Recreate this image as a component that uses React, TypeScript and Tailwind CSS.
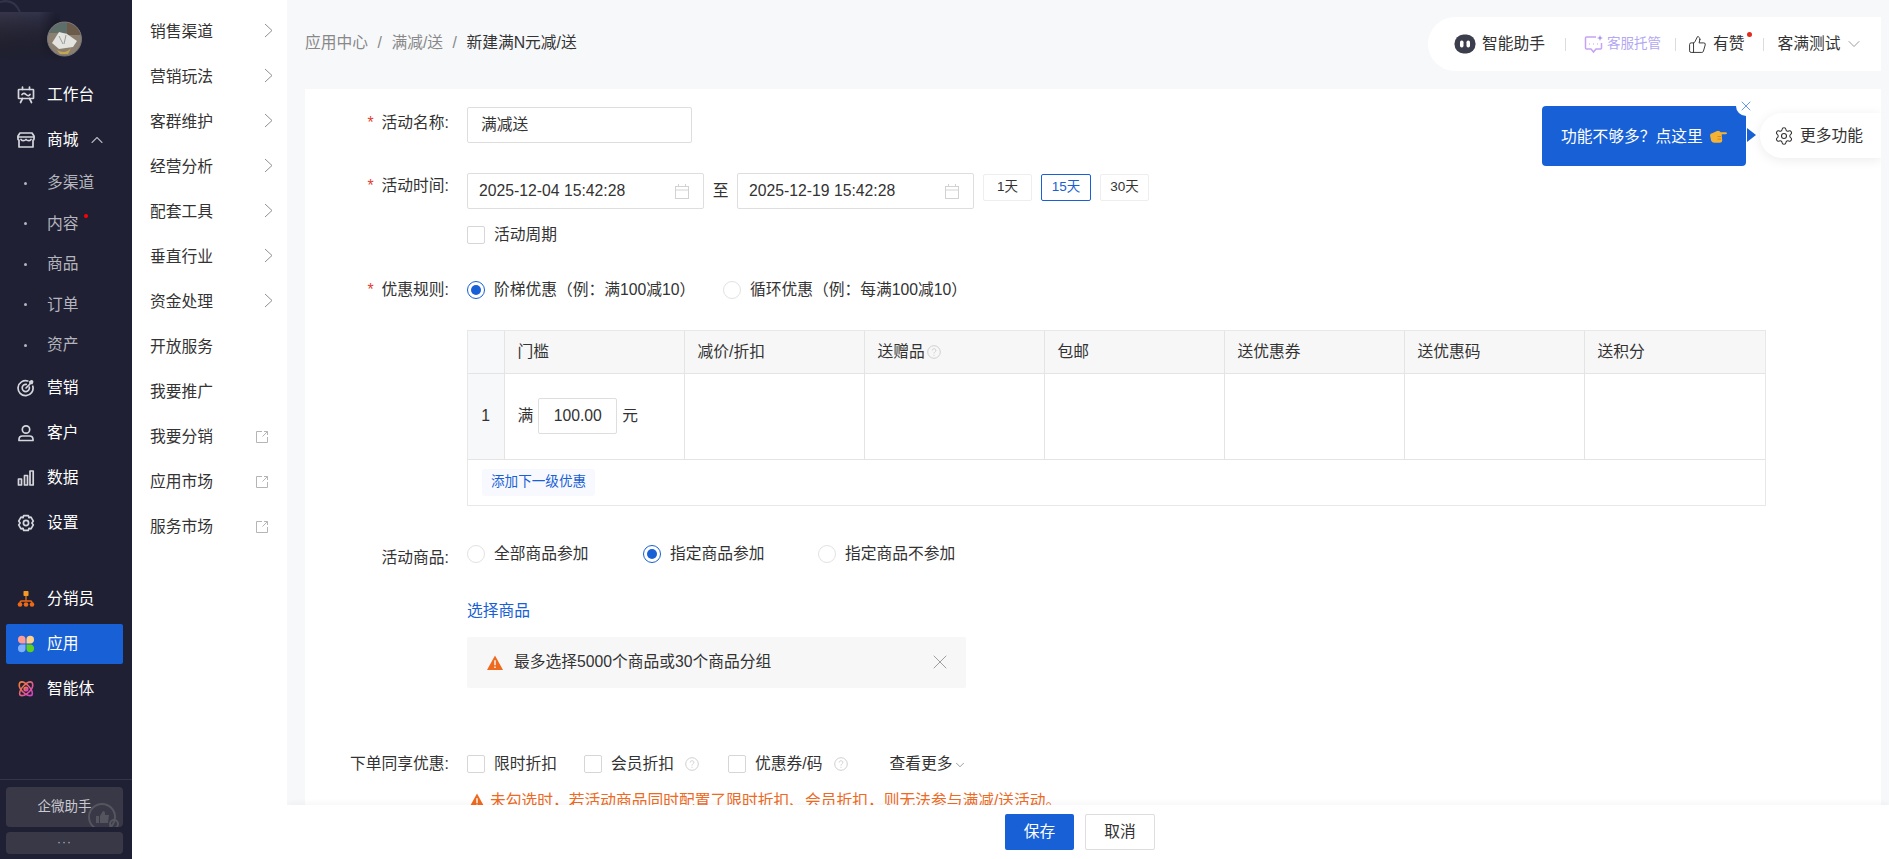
import React from "react";
import { ChevronDown, ChevronUp, Settings, ThumbsUp, X } from "lucide-react";

const Ic = ({ children, size = 18 }: { children: React.ReactNode; size?: number }) => (
  <svg width={size} height={size} viewBox="0 0 18 18" fill="none" stroke="#d6d7dd" strokeWidth="1.700" strokeLinecap="round" strokeLinejoin="round">
    {children}
  </svg>
);

const IWork = () => (
  <Ic>
    <path d="M5.500 1v2.500M12.500 1v2.500" />
    <rect x="1.500" y="3.500" width="15" height="9" rx="0.500" />
    <path d="M5 8.500c1.200-1.600 2.400-1.600 4 0s2.800 1.600 4 0" />
    <path d="M5.500 12.500 3.500 16.500M12.500 12.500l2 4" />
  </Ic>
);
const IStore = () => (
  <Ic>
    <path d="M3 2h12l2 3v3a1 1 0 0 1-1 1v7H2V9a1 1 0 0 1-1-1V5z" />
    <path d="M1 6h16M4 8.500c1.200 1.600 3.600 1.600 5 0 1.400 1.600 3.800 1.600 5 0" />
  </Ic>
);
const ITarget = () => (
  <Ic>
    <path d="M15.800 7.200A7.500 7.500 0 1 1 10.800 2" />
    <path d="M12.300 8.200a3.600 3.600 0 1 1-3-2.800" />
    <path d="M9 9l5-5M13 2.500v2h2" />
    <circle cx="14.600" cy="2.800" r="1" fill="#d6d7dd" />
  </Ic>
);
const IUser = () => (
  <Ic>
    <circle cx="9" cy="5.500" r="3.700" />
    <path d="M2 16.500v-1c0-2 1.500-3.500 3.500-3.500h7c2 0 3.500 1.500 3.500 3.500v1z" />
  </Ic>
);
const IBars = () => (
  <Ic>
    <rect x="1.500" y="10" width="3" height="6" />
    <rect x="7.500" y="6.500" width="3" height="9.500" />
    <rect x="13" y="2" width="3.200" height="14" />
  </Ic>
);
const IGear = () => (
  <Ic>
    <path d="M6.700 1.600h4.600l.7 2 2-.5 2.300 4-1.400 1.900 1.400 1.900-2.300 4-2-.5-.7 2H6.700l-.7-2-2 .5-2.300-4L3.100 9 1.700 7.100l2.300-4 2 .5z" />
    <circle cx="9" cy="9" r="2.600" />
  </Ic>
);
const IDist = () => (
  <svg width="18" height="18" viewBox="0 0 18 18" fill="none">
    <rect x="6.500" y="1" width="5" height="5" rx="0.800" fill="#f59a23" />
    <path d="M9 6v5M3 14v-1.500q0-1.500 1.500-1.500h9q1.500 0 1.500 1.500V14" stroke="#ef6a17" strokeWidth="1.300" />
    <circle cx="3" cy="14.500" r="2.300" fill="#ef6a17" />
    <circle cx="9" cy="14.500" r="2.300" fill="#ef6a17" />
    <circle cx="15" cy="14.500" r="2.300" fill="#ef6a17" />
  </svg>
);
const IApp = () => (
  <svg width="18" height="18" viewBox="0 0 18 18">
    <path d="M1 4.500A3.500 3.500 0 0 1 8.500 4.500V8.500H4.500A3.500 3.500 0 0 1 1 4.500z" fill="#ff9a94" />
    <path d="M9.500 4.500A3.500 3.500 0 0 1 17 4.500 3.500 3.500 0 0 1 13.500 8.500H9.500z" fill="#ffcf8c" />
    <path d="M1 13.500A3.500 3.500 0 0 1 4.500 9.500H8.500V13.500A3.500 3.500 0 0 1 1 13.500z" fill="#7fb0ff" />
    <path d="M9.500 9.500H13.500A3.500 3.500 0 0 1 17 13.500 3.500 3.500 0 0 1 9.500 13.500z" fill="#5fd01f" />
  </svg>
);
const IAgent = () => (
  <svg width="18" height="18" viewBox="0 0 18 18" fill="none" strokeWidth="1.600">
    <defs>
      <linearGradient id="ag" x1="0" y1="0" x2="1" y2="1">
        <stop offset="0" stopColor="#f5822e" />
        <stop offset="1" stopColor="#d63fd0" />
      </linearGradient>
    </defs>
    <g stroke="url(#ag)">
      <path d="M3 2.500c2-1.500 5 0 8 3s5 7 4 9.500c-2 1.500-6 0-9-3S1.500 5 3 2.500z" />
      <path d="M15 2.500c-2-1.500-5 0-8 3s-5 7-4 9.500c2 1.500 6 0 9-3s4.500-7 3-9.500z" />
      <circle cx="9" cy="9" r="1.800" fill="#e5486e" />
    </g>
  </svg>
);
const IExt = () => (
  <svg width="12" height="12" viewBox="0 0 12 12" fill="none" stroke="#b5b5b5" strokeWidth="1">
    <path d="M6 .5H.5v11h11V6M6.500 5.500 11.500.5M8 .5h3.500V4" />
  </svg>
);
const IArrow = () => (
  <svg width="9" height="15" viewBox="0 0 9 15" fill="none" stroke="#8f8f8f" strokeWidth="1">
    <path d="M1 1l7 6.500L1 14" />
  </svg>
);
const ICal = () => (
  <svg width="14" height="15" viewBox="0 0 14 15" fill="none" stroke="#d2d2d2" strokeWidth="1">
    <rect x="0.500" y="2.500" width="13" height="12" />
    <path d="M.5 6h13M3.500 0v3M10.500 0v3" />
  </svg>
);
const IWarn = ({ w = 16 }: { w?: number }) => (
  <svg width={w} height={w - 1} viewBox="0 0 15 14">
    <path d="M7.500.5 15 14H0z" fill="#ee6a1f" />
    <path d="M7.500 5v4.500M7.500 10.800v1.300" stroke="#fff" strokeWidth="1.300" />
  </svg>
);
const IHelp = () => (
  <svg width="14" height="14" viewBox="0 0 14 14" fill="none" stroke="#cfcfcf" strokeWidth="1">
    <circle cx="7" cy="7" r="6.300" />
    <path d="M5.200 5.500c0-2.300 3.700-2.300 3.700 0 0 1.300-1.900 1.500-1.900 3M7 9.800v1" />
  </svg>
);

const NavItem = ({ icon, label, active, children }: { icon: React.ReactNode; label: string; active?: boolean; children?: React.ReactNode }) => (
  <div className="h-[45px] flex items-center">
    <div className={`h-[40px] w-[117px] ml-[6px] mt-[2px] pl-[11px] flex items-center gap-[12px] rounded-[2px] text-white ${active ? "bg-[#1760d6]" : ""}`}>
      <span className="w-[18px] h-[18px] flex">{icon}</span>
      <span>{label}</span>
      {children}
    </div>
  </div>
);

const SubItem = ({ label, dot }: { label: string; dot?: boolean }) => (
  <div className="h-[40.500px] flex items-center pl-[24px] text-[#b4b5bd]">
    <span className="w-[3px] h-[3px] rounded-full bg-[#b4b5bd] mr-[20px]" />
    <span className="relative">
      {label}
      {dot && <span className="absolute right-[-9px] top-[2px] w-[4px] h-[4px] rounded-full bg-[#ff0000]" />}
    </span>
  </div>
);

const Second = ({ label, kind }: { label: string; kind?: "arrow" | "ext" }) => (
  <div className="h-[45px] flex items-center pl-[18px] text-[#333]">
    <span className="w-[107px]">{label}</span>
    {kind === "arrow" && <span className="ml-[7px] mt-[-3px] flex"><IArrow /></span>}
    {kind === "ext" && <span className="ml-[-1px] flex"><IExt /></span>}
  </div>
);

const Label = ({ text, req, offset }: { text: string; req?: boolean; offset: string }) => (
  <div className={`w-[144px] mr-[18px] shrink-0 text-right leading-[22px] text-[#333] ${offset}`}>
    {req && <span className="text-[#e2402f] mr-[8px]">*</span>}
    {text}
  </div>
);

const Box = () => <span className="w-[18px] h-[18px] rounded-[2px] border border-[#d6d6d6] bg-white shrink-0" />;

const Radio = ({ on }: { on?: boolean }) => (
  <span className={`w-[18px] h-[18px] rounded-full border shrink-0 flex items-center justify-center bg-white ${on ? "border-[#1760d6]" : "border-[#e2e2e2]"}`}>
    {on && <span className="w-[10px] h-[10px] rounded-full bg-[#1760d6]" />}
  </span>
);

const DateBox = ({ value }: { value: string }) => (
  <div className="w-[237px] h-[36px] rounded-[2px] border border-[#dedede] flex items-center pl-[11px] pr-[14px] justify-between text-[#333]">
    <span>{value}</span>
    <ICal />
  </div>
);

const DayBtn = ({ t, on, w }: { t: string; on?: boolean; w: string }) => (
  <div className={`${w} h-[27px] rounded-[2px] border flex items-center justify-center text-[13.500px] pb-[1px] ${on ? "border-[#1760d6] text-[#1760d6]" : "border-[#eeeeee] text-[#333]"}`}>{t}</div>
);

const cols = ["减价/折扣", "送赠品", "包邮", "送优惠券", "送优惠码", "送积分"];

export default function App() {
  return (
    <div className="w-[1889px] h-[859px] flex overflow-hidden text-[15.750px] [font-family:'Liberation_Sans','Noto_Sans_CJK_SC',sans-serif]">
      {/* dark nav */}
      <aside className="w-[132px] h-full bg-[#1f2033] flex flex-col shrink-0">
        <div className="h-[71px] relative shrink-0">
          <svg className="absolute left-0 top-0" width="62" height="64" viewBox="0 0 62 64">
            <defs>
              <linearGradient id="bag" x1="0" y1="0" x2="1" y2="0">
                <stop offset="0" stopColor="#37364a" />
                <stop offset="0.700" stopColor="#33334a" />
                <stop offset="1" stopColor="#1f2033" />
              </linearGradient>
              <linearGradient id="bagv" x1="0" y1="0" x2="0" y2="1">
                <stop offset="0" stopColor="#000" stopOpacity="0" />
                <stop offset="1" stopColor="#1f2033" />
              </linearGradient>
            </defs>
            <rect x="0" y="12" width="55" height="50" fill="url(#bag)" />
            <rect x="0" y="12" width="60" height="50" fill="url(#bagv)" />
            <path d="M0 2Q14 -2 20 12" stroke="#32324a" strokeWidth="2" fill="none" />
          </svg>
          <svg className="absolute left-[47px] top-[21px]" width="35" height="36" viewBox="0 0 35 36">
            <clipPath id="av"><circle cx="17.500" cy="18" r="17" /></clipPath>
            <g clipPath="url(#av)">
              <rect width="35" height="36" fill="#8a7f70" />
              <rect width="35" height="12" fill="#5d6f68" />
              <rect x="20" width="15" height="14" fill="#6c5a4a" />
              <path d="M5 22 12 11l8 2 10 7-4 6-14 2z" fill="#e3e3df" />
              <path d="M10 29q8 5 14-2l-3 6H13z" fill="#c2a94f" />
              <path d="M12 15l4 8M19 14l-2 9" stroke="#9a9a98" strokeWidth="1" />
            </g>
            <circle cx="17.500" cy="18" r="17" fill="none" stroke="#77757a" strokeWidth="1" />
          </svg>
        </div>
        <NavItem icon={<IWork />} label="工作台" />
        <NavItem icon={<IStore />} label="商城">
          <ChevronUp size={20} strokeWidth={1.300} color="#b4b5bd" className="ml-[-4px]" />
        </NavItem>
        <div className="pt-[2px] mb-[-1px]">
          <SubItem label="多渠道" />
          <SubItem label="内容" dot />
          <SubItem label="商品" />
          <SubItem label="订单" />
          <SubItem label="资产" />
        </div>
        <NavItem icon={<ITarget />} label="营销" />
        <NavItem icon={<IUser />} label="客户" />
        <NavItem icon={<IBars />} label="数据" />
        <NavItem icon={<IGear />} label="设置" />
        <div className="h-[31px] shrink-0" />
        <NavItem icon={<IDist />} label="分销员" />
        <NavItem icon={<IApp />} label="应用" active />
        <NavItem icon={<IAgent />} label="智能体" />
        <div className="flex-1" />
        <div className="h-[80px] border-t border-[#34354a] pl-[6px] pr-[9px] pt-[7px] shrink-0">
          <div className="h-[40px] rounded-[4px] bg-[#383847] flex items-center justify-center text-[13.500px] text-[#c9c9cf] relative overflow-hidden">
            企微助手
            <svg className="absolute right-0 bottom-0" width="38" height="26" viewBox="0 0 38 26" fill="none">
              <circle cx="17" cy="16" r="13" stroke="#55555f" strokeWidth="2" />
              <path d="M11 15h3v7h-3zM15 15l3-5q2 0 2 2v2h4l-1 8h-8z" fill="#55555f" />
              <circle cx="29" cy="23" r="4" stroke="#55555f" strokeWidth="2" />
            </svg>
          </div>
          <div className="mt-[5px] h-[22px] rounded-[4px] bg-[#383847] flex items-center justify-center text-[#b4b5bd] text-[12px] pb-[3px] tracking-[1px]">···</div>
        </div>
      </aside>

      {/* secondary nav */}
      <aside className="w-[155px] h-full bg-white pt-[9px] shrink-0">
        {["销售渠道", "营销玩法", "客群维护", "经营分析", "配套工具", "垂直行业", "资金处理"].map((l) => (
          <Second key={l} label={l} kind="arrow" />
        ))}
        <Second label="开放服务" />
        <Second label="我要推广" />
        <Second label="我要分销" kind="ext" />
        <Second label="应用市场" kind="ext" />
        <Second label="服务市场" kind="ext" />
      </aside>

      {/* main */}
      <main className="flex-1 h-full bg-[#f7f8fa] flex flex-col min-w-0 overflow-hidden">
        <header className="h-[89px] shrink-0 flex items-start pl-[18px] pr-[8px]">
          <nav className="h-[86px] flex items-center gap-[9.500px] text-[#888]">
            <span>应用中心</span>
            <span>/</span>
            <span>满减/送</span>
            <span>/</span>
            <span className="text-[#333]">新建满N元减/送</span>
          </nav>
          <div className="ml-auto mt-[17px] w-[453px] h-[54px] bg-white rounded-l-[27px] flex items-center pl-[26px] text-[#333]">
            <svg width="22" height="22" viewBox="0 0 22 22">
              <rect x="0.500" y="1.500" width="21" height="19" rx="9" fill="#3c3d4d" />
              <rect x="6" y="7.500" width="3.500" height="7" rx="1.700" fill="#fff" />
              <rect x="12.500" y="7.500" width="3.500" height="7" rx="1.700" fill="#fff" />
            </svg>
            <span className="ml-[6px]">智能助手</span>
            <span className="ml-[20px] w-px h-[13px] bg-[#dcdcdc]" />
            <svg className="ml-[18px]" width="20" height="20" viewBox="0 0 20 20" fill="none" stroke="#c6a2f5" strokeWidth="1.500">
              <path d="M12 3H2.500a1 1 0 0 0-1 1v10a1 1 0 0 0 1 1H7l2.500 3 2.500-3h4.500a1 1 0 0 0 1-1V9" />
              <path d="M5 10h.5M9 10h.5M13 10h.5" strokeWidth="1.800" />
              <path d="M16 1l.8 2.200L19 4l-2.200.8L16 7l-.8-2.200L13 4l2.200-.8z" fill="#a98df0" stroke="none" />
            </svg>
            <span className="ml-[3px] text-[13.500px] text-[#b3a8f2]">客服托管</span>
            <span className="ml-[14px] w-px h-[13px] bg-[#dcdcdc]" />
            <ThumbsUp className="ml-[12px]" size={19} strokeWidth={1.200} color="#333" />
            <span className="ml-[6px] relative">
              有赞
              <span className="absolute right-[-7px] top-[0px] w-[5px] h-[5px] rounded-full bg-[#e02b1d]" />
            </span>
            <span className="ml-[18px] w-px h-[13px] bg-[#dcdcdc]" />
            <span className="ml-[14px]">客满测试</span>
            <ChevronDown className="ml-[3px]" size={20} strokeWidth={1} color="#888" />
          </div>
        </header>

        <div className="flex-1 min-h-0 pl-[18px] pr-[8px]">
          <section className="relative h-full bg-white pt-[18px] overflow-hidden">
            <div className="flex">
              <Label text="活动名称:" req offset="mt-[5px]" />
              <div className="w-[225px] h-[36px] rounded-[2px] border border-[#dedede] flex items-center pl-[13px] text-[#333]">满减送</div>
            </div>

            <div className="flex mt-[30px]">
              <Label text="活动时间:" req offset="mt-[2px]" />
              <div>
                <div className="flex items-start">
                  <DateBox value="2025-12-04 15:42:28" />
                  <span className="w-[33px] h-[36px] flex items-center justify-center text-[#333]">至</span>
                  <DateBox value="2025-12-19 15:42:28" />
                  <div className="flex gap-[9px] ml-[9px] mt-[1px]">
                    <DayBtn t="1天" w="w-[49px]" />
                    <DayBtn t="15天" on w="w-[50px]" />
                    <DayBtn t="30天" w="w-[49px]" />
                  </div>
                </div>
                <div className="flex items-center mt-[14px] h-[24px] text-[#333]">
                  <Box />
                  <span className="ml-[9px]">活动周期</span>
                </div>
              </div>
            </div>

            <div className="flex mt-[34px] h-[18px] items-center">
              <Label text="优惠规则:" req offset="" />
              <Radio on />
              <span className="ml-[9px] w-[229px] text-[#333]">阶梯优惠（例：满100减10）</span>
              <Radio />
              <span className="ml-[9px] text-[#333]">循环优惠（例：每满100减10）</span>
            </div>

            <div className="ml-[162px] mt-[31px] w-[1299px] border border-[#e8e8e8] text-[#333]">
              <table className="w-full table-fixed border-collapse">
                <colgroup>
                  <col className="w-[36px]" />
                  <col className="w-[180px]" />
                  <col span={5} className="w-[180px]" />
                  <col />
                </colgroup>
                <tbody>
                  <tr className="h-[42px] bg-[#f7f7f7]">
                    <td className="bg-[#f7f8fa] border-b border-r border-[#e4e4e4]" />
                    <td className="border-b border-r border-[#e4e4e4] pl-[13px]">门槛</td>
                    {cols.map((c, i) => (
                      <td key={c} className={`border-b border-[#e4e4e4] pl-[13px] ${i < 5 ? "border-r" : ""}`}>
                        <span className="inline-flex items-center">
                          {c}
                          {c === "送赠品" && <span className="ml-[2px] flex"><IHelp /></span>}
                        </span>
                      </td>
                    ))}
                  </tr>
                  <tr className="h-[86px]">
                    <td className="bg-[#f7f8fa] border-b border-r border-[#e4e4e4] text-center">1</td>
                    <td className="border-b border-r border-[#e4e4e4] pl-[13px]">
                      <div className="flex items-center">
                        满
                        <div className="w-[79px] h-[36px] mx-[5px] rounded-[2px] border border-[#dedede] flex items-center justify-center">100.00</div>
                        元
                      </div>
                    </td>
                    {cols.map((c, i) => (
                      <td key={c} className={`border-b border-[#e4e4e4] ${i < 5 ? "border-r" : ""}`} />
                    ))}
                  </tr>
                </tbody>
              </table>
              <div className="h-[45px] flex items-center pl-[14px]">
                <span className="h-[27px] px-[9px] flex items-center rounded-[3px] bg-[#f7f9ff] text-[#1760d6] text-[13.600px]">添加下一级优惠</span>
              </div>
            </div>

            <div className="flex mt-[39px] h-[18px] items-center">
              <Label text="活动商品:" offset="mt-[8px]" />
              <Radio />
              <span className="ml-[9px] w-[149px] text-[#333]">全部商品参加</span>
              <Radio on />
              <span className="ml-[9px] w-[148px] text-[#333]">指定商品参加</span>
              <Radio />
              <span className="ml-[9px] text-[#333]">指定商品不参加</span>
            </div>

            <div className="ml-[162px] mt-[37px] leading-[22px] text-[#1760d6]">选择商品</div>

            <div className="ml-[162px] mt-[15px] w-[499px] h-[51px] rounded-[2px] bg-[#f7f7f7] flex items-center pl-[20px] pr-[14px] text-[#333]">
              <IWarn />
              <span className="ml-[11px]">最多选择5000个商品或30个商品分组</span>
              <X className="ml-auto" size={24} strokeWidth={0.800} color="#888" />
            </div>

            <div className="flex mt-[67px] h-[18px] items-center text-[#333]">
              <Label text="下单同享优惠:" offset="" />
              <Box />
              <span className="ml-[9px] w-[90px]">限时折扣</span>
              <Box />
              <span className="ml-[9px]">会员折扣</span>
              <span className="ml-[11px] mr-[29px] flex"><IHelp /></span>
              <Box />
              <span className="ml-[9px]">优惠券/码</span>
              <span className="ml-[12px] mr-[41px] flex"><IHelp /></span>
              <span>查看更多</span>
              <ChevronDown size={14} strokeWidth={1} color="#555" className="ml-[1px] mt-[2px]" />
            </div>

            <div className="ml-[164px] mt-[17px] flex items-center text-[#ee6a1f] leading-[22px]">
              <IWarn />
              <span className="ml-[5px]">未勾选时，若活动商品同时配置了限时折扣、会员折扣，则无法参与满减/送活动。</span>
            </div>

            {/* floating tip */}
            <div className="absolute left-[1237px] top-[17px] w-[204px] h-[60px] rounded-[4px] bg-[#1760d6] text-white flex items-center pl-[19px] pt-[1px]">
              <span>功能不够多？点这里</span>
              <svg className="ml-[6px]" width="18" height="16" viewBox="0 0 17 15">
                <path d="M1 6q0-2 2-2l4-2q2-1 3 0l1 1h4.500q1.500 0 1.500 1t-1.500 1H12l.5 6q0 2-2.500 2H5q-2 0-3-2z" fill="#f5b335" />
                <path d="M8 7h3.500M8 9.500h3.500" stroke="#c9851c" strokeWidth="0.800" />
              </svg>
            </div>
            <div className="absolute left-[1431px] top-[7px] w-[20px] h-[20px] rounded-full bg-white flex items-center justify-center">
              <X size={16} strokeWidth={1.200} color="#3f7fe6" />
            </div>
            <div className="absolute left-[1442px] top-[39px] w-0 h-0 border-y-[7px] border-y-transparent border-l-[9px] border-l-[#1760d6]" />
            <div className="absolute left-[1455px] top-[24px] w-[121px] h-[45px] rounded-l-[22px] bg-white shadow-[0_2px_12px_rgba(0,0,0,0.08)] flex items-center pl-[14px] text-[#333]">
              <Settings size={20} strokeWidth={1.300} color="#333" />
              <span className="ml-[6px]">更多功能</span>
            </div>
          </section>
        </div>

        <footer className="h-[54px] shrink-0 bg-white shadow-[0_-2px_6px_rgba(0,0,0,0.04)] relative flex items-center justify-center gap-[11px] pr-[16px]">
          <div className="w-[69px] h-[36px] rounded-[2px] bg-[#1760d6] text-white flex items-center justify-center">保存</div>
          <div className="w-[70px] h-[36px] rounded-[2px] border border-[#dedede] text-[#333] flex items-center justify-center">取消</div>
        </footer>
      </main>
    </div>
  );
}
